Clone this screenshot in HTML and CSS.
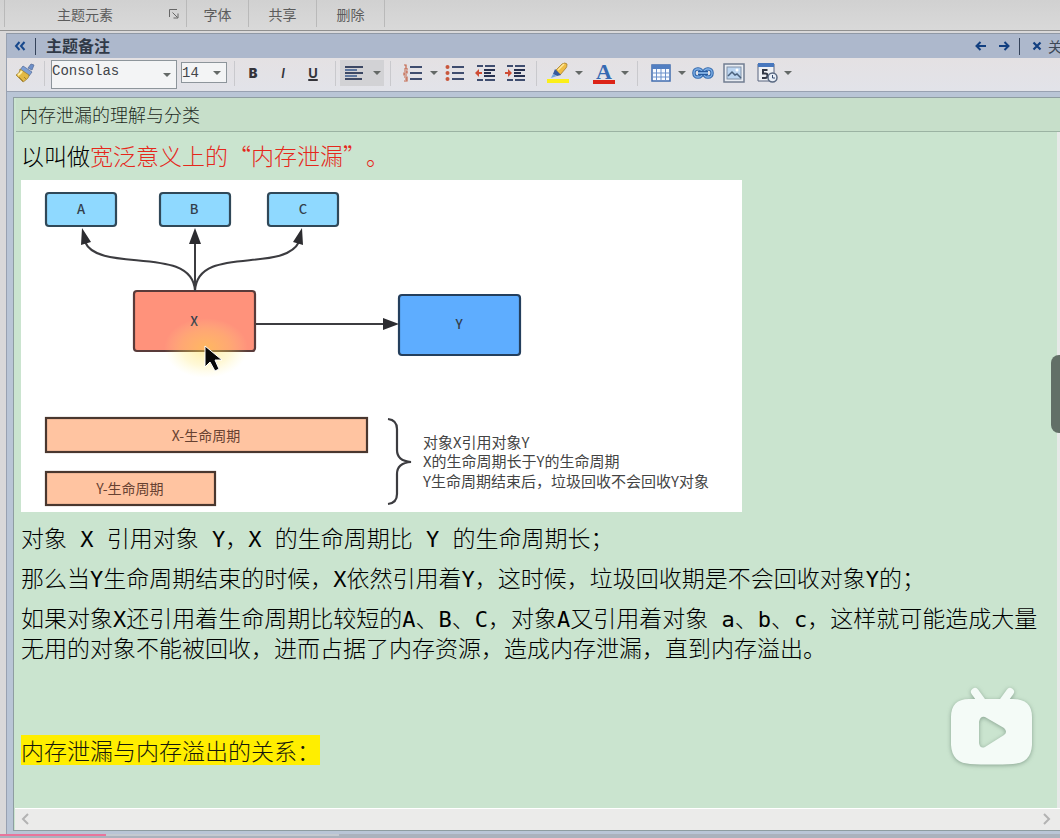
FILE: index.html
```html
<!DOCTYPE html>
<html lang="zh-CN">
<head>
<meta charset="utf-8">
<title>主题备注</title>
<link rel="stylesheet" href="styles.css">
</head>
<body>
<header class="ribbon">
  <div class="ribbon-group ribbon-group-wide"><span>主题元素</span>
    <button class="launcher" aria-label="更多主题元素"><svg width="12" height="12" viewBox="0 0 12 12" fill="none" stroke="#666"><path d="M1.500 9V1.500H9M4.500 4.500L9.500 9.500M10 5.500V10H5.500"/></svg></button>
  </div>
  <div class="ribbon-group ribbon-group-first"><span>字体</span></div>
  <div class="ribbon-group"><span>共享</span></div>
  <div class="ribbon-group"><span>删除</span></div>
</header>

<main class="panel">
  <div class="titlebar">
    <button class="tb-btn" aria-label="折叠"><svg width="12" height="12" viewBox="0 0 12 12" fill="none" stroke="#17488c" stroke-width="2"><path d="M5.500 2L2 6l3.500 4M10.500 2L7 6l3.500 4"/></svg></button>
    <span class="tb-line"></span>
    <h2 class="tb-title">主题备注</h2>
    <button class="tb-btn nav-prev" aria-label="上一个"><svg width="12" height="12" viewBox="0 0 12 12" fill="none" stroke="#123f80" stroke-width="2"><path d="M11 6H2M5.500 2L1.500 6l4 4"/></svg></button>
    <button class="tb-btn nav-next" aria-label="下一个"><svg width="12" height="12" viewBox="0 0 12 12" fill="none" stroke="#123f80" stroke-width="2"><path d="M1 6h9M6.500 2l4 4-4 4"/></svg></button>
    <span class="tb-line"></span>
    <button class="tb-btn close"><svg width="10" height="10" viewBox="0 0 10 10" fill="none" stroke="#123f80" stroke-width="2.200"><path d="M1.500 1.500l7 7M8.500 1.500l-7 7"/></svg><span>关闭</span></button>
  </div>

  <div class="toolbar">
    <button class="tool" aria-label="格式刷"><svg width="22" height="22" viewBox="0 0 22 22"><path d="M14 6l3-4 3 1-2 5z" fill="#6d8fc9" stroke="#5b719c" stroke-width=".8"/><path d="M9 4l9 6-3 4-9-6z" fill="#7d9fd6" stroke="#5a719c" stroke-width=".8"/><path d="M6 7l9 6c0 3-3 5-6 7L2 13c2-1 4-3 4-6z" fill="#e3b944" stroke="#9c8038" stroke-width=".8"/><path d="M4 13c2-1 3-2 4-4" stroke="#fff0a8" stroke-width="2" fill="none"/><path d="M9 19l-4-4M12 17l-2-2" stroke="#a9822a" fill="none"/></svg></button>
    <span class="sep"></span>
    <div class="fields">
      <select class="font-name" aria-label="字体"><option>Consolas</option></select>
      <select class="font-size" aria-label="字号"><option>14</option></select>
    </div>
    <span class="sep"></span>
    <div class="styles">
      <button class="tool bold">B</button><button class="tool italic">I</button><button class="tool underline">U</button>
    </div>
    <span class="sep"></span>
    <button class="align" aria-label="对齐"><svg width="20" height="16" viewBox="0 0 20 16" stroke="#3c4864" stroke-width="2"><path d="M1 2h18M1 8h18" /><path d="M1 5h12M1 11h12" stroke="#5c769e"/><path d="M1 14h17"/></svg><i class="caret"></i></button>
    <span class="sep"></span>
    <div class="lists">
      <div class="split"><button class="tool" aria-label="编号"><svg width="20" height="18" viewBox="0 0 20 18" fill="none"><path d="M7 3h12M7 9h12M7 15h12" stroke="#3f4d6f" stroke-width="2"/><path d="M1 1h2v4M1 5h4M1 7h3v2H1v2h3M1 13h3v4H1M2 15h2" stroke="#c46449" stroke-width="1.200"/></svg></button><button class="drop" aria-label="编号选项"><i class="caret"></i></button></div>
      <button class="tool" aria-label="项目符号"><svg width="20" height="18" viewBox="0 0 20 18"><path d="M7 3h12M7 9h12M7 15h12" stroke="#3f4d6f" stroke-width="2"/><g fill="#c9573c"><circle cx="2.500" cy="3" r="2"/><circle cx="2.500" cy="9" r="2"/><circle cx="2.500" cy="15" r="2"/></g></svg></button>
      <button class="tool indent" aria-label="减少缩进"><svg width="22" height="18" viewBox="0 0 22 18"><path d="M3 2h6M11 2h10M3 16h6M11 16h10" stroke="#3f4d6f" stroke-width="2"/><path d="M10 6h11M10 9h7M10 12h11" stroke="#26304f" stroke-width="2"/><path d="M1 9l4-4v3h3v2H5v3z" fill="#cf4c34"/></svg></button>
      <button class="tool indent" aria-label="增加缩进"><svg width="22" height="18" viewBox="0 0 22 18"><path d="M3 2h6M11 2h10M3 16h6M11 16h10" stroke="#3f4d6f" stroke-width="2"/><path d="M10 6h11M10 9h7M10 12h11" stroke="#26304f" stroke-width="2"/><path d="M8 9L4 5v3H1v2h3v3z" fill="#cf4c34"/></svg></button>
    </div>
    <span class="sep"></span>
    <div class="colors">
      <div class="split"><button class="tool" aria-label="突出显示"><svg width="22" height="22" viewBox="0 0 22 22"><path d="M9 8l6-6q3-2 5 0 0 3-1 4l-6 7z" fill="#efbd45" stroke="#a67d2b" stroke-width=".8"/><path d="M11 8l6-6" stroke="#ffe99a" stroke-width="1.500"/><path d="M8 7l6 6-4 1-4-2z" fill="#375a9d"/><path d="M6 12l4 2-6 2z" fill="#72a5df"/><path d="M0 17h22v4H0z" fill="#fbef1a"/></svg></button><button class="drop" aria-label="突出显示颜色"><i class="caret"></i></button></div>
      <div class="split"><button class="tool font-color" aria-label="字体颜色"><span>A</span></button><button class="drop" aria-label="字体颜色选项"><i class="caret"></i></button></div>
    </div>
    <span class="sep"></span>
    <div class="inserts">
      <div class="split"><button class="tool" aria-label="表格"><svg width="20" height="18" viewBox="0 0 20 18"><rect x="1" y="1" width="18" height="16" fill="#f8fbff" stroke="#426daf" stroke-width="1.500"/><path d="M1 1h18v4H1z" fill="#527fc2"/><path d="M1 9h18M1 13h18M5.500 5v12M10 5v12M14.500 5v12" stroke="#6a90ca"/></svg></button><button class="drop" aria-label="表格选项"><i class="caret"></i></button></div>
      <button class="tool" aria-label="超链接"><svg width="22" height="14" viewBox="0 0 22 14" fill="none"><rect x="2" y="3" width="8" height="8" rx="3.500" stroke="#366bad" stroke-width="3.500"/><rect x="12" y="3" width="8" height="8" rx="3.500" stroke="#366bad" stroke-width="3.500"/><rect x="2" y="3" width="8" height="8" rx="3.500" stroke="#7fb0e8" stroke-width="1.300"/><rect x="12" y="3" width="8" height="8" rx="3.500" stroke="#7fb0e8" stroke-width="1.300"/><path d="M6 7h10" stroke="#285a9d" stroke-width="4"/><path d="M6 7h10" stroke="#9bc7f5" stroke-width="1.500"/></svg></button>
      <button class="tool image" aria-label="图片"><svg width="22" height="20" viewBox="0 0 22 20"><rect x="1" y="1" width="20" height="18" fill="#e8ecf2" stroke="#727e91" stroke-width="1.500"/><rect x="4" y="4" width="14" height="12" fill="#bcd5f0" stroke="#8292a8"/><path d="M5 13l4-4 3 3 2-1 4 4" fill="none" stroke="#4a617d" stroke-width="1.500"/><circle cx="14" cy="7" r="1.500" fill="#fff"/></svg></button>
      <div class="split date"><button class="tool" aria-label="日期"><svg width="22" height="22" viewBox="0 0 22 22"><path d="M2 2h16v17H2z" fill="#eff1f5" stroke="#59657e"/><path d="M2 1h16v4H2z" fill="#4777be"/><path d="M11.500 8H7v3.500h2.500q2 0 2 2.200t-2.500 2.300H6" fill="none" stroke="#333947" stroke-width="2"/><circle cx="16.500" cy="15.500" r="4.500" fill="#e9eff7" stroke="#586881" stroke-width="1.500"/><path d="M16.500 13v3h2.500" fill="none" stroke="#364b6e"/></svg></button><button class="drop" aria-label="日期选项"><i class="caret"></i></button></div>
    </div>
  </div>

  <section class="note">
    <h1 class="note-title">内存泄漏的理解与分类</h1>
    <article class="editor">
      <p>以叫做<span class="red">宽泛意义上的“内存泄漏”。</span></p>
      <figure class="diagram">
        <svg viewBox="0 0 721 332" role="img" aria-label="对象引用与生命周期">
          <defs><radialGradient id="glow"><stop offset="0" stop-color="#ffdc45" stop-opacity=".5"/><stop offset=".6" stop-color="#ffe45e" stop-opacity=".25"/><stop offset="1" stop-color="#fff48a" stop-opacity="0"/></radialGradient></defs>
          <g fill="#8fd9ff" stroke="#304858" stroke-width="2.200"><rect x="25" y="13" width="70" height="33" rx="3"/><rect x="139" y="13" width="70" height="33" rx="3"/><rect x="247" y="13" width="70" height="33" rx="3"/></g>
          <rect x="113" y="111" width="121" height="60" rx="3" fill="#ff927b" stroke="#593b3a" stroke-width="2.200"/>
          <rect x="378" y="115" width="121" height="60" rx="3" fill="#5eadff" stroke="#243f5d" stroke-width="2.200"/>
          <g fill="none" stroke="#3c3c40" stroke-width="2"><path d="M174 111V60M174 111C172 64 78 94 64 62M174 111C176 64 262 94 278 62M235 144H364"/></g>
          <g fill="#2c2c30"><path d="M61 48l9 14-10 3zM174 48l6 16h-12zM281 48l1 17-10-3zM378 144l-16 6v-12z"/></g>
          <g class="node-label"><text x="60" y="34">A</text><text x="173" y="34">B</text><text x="282" y="34">C</text><text x="173" y="146">X</text><text x="438" y="149">Y</text></g>
          <g fill="#ffc4a1" stroke="#49372f" stroke-width="2.200"><rect x="25" y="238" width="321" height="34"/><rect x="25" y="292" width="169" height="33"/></g>
          <g class="bar-label"><text x="185" y="261">X-生命周期</text><text x="109" y="314">Y-生命周期</text></g>
          <path d="M367 239q9 1 9 10v21q0 11 14 12-14 1-14 12v20q0 9-9 10" fill="none" stroke="#3c3c40" stroke-width="2.200"/>
          <g class="caption"><text x="402" y="268">对象X引用对象Y</text><text x="402" y="287">X的生命周期长于Y的生命周期</text><text x="402" y="307">Y生命周期结束后，垃圾回收不会回收Y对象</text></g>
          <ellipse cx="185" cy="168" rx="42" ry="30" fill="url(#glow)"/>
          <path d="M184 166v21l5-5 5 9 4-2-4-9h7z" fill="#090909" stroke="#fff"/>
        </svg>
      </figure>
      <p>对象<span class="mono"> X </span>引用对象<span class="mono"> Y</span>，<span class="mono">X </span>的生命周期比<span class="mono"> Y </span>的生命周期长；</p>
      <p>那么当<span class="mono">Y</span>生命周期结束的时候，<span class="mono">X</span>依然引用着<span class="mono">Y</span>，这时候，垃圾回收期是不会回收对象<span class="mono">Y</span>的；</p>
      <p>如果对象<span class="mono">X</span>还引用着生命周期比较短的<span class="mono">A</span>、<span class="mono">B</span>、<span class="mono">C</span>，对象<span class="mono">A</span>又引用着对象<span class="mono"> a</span>、<span class="mono">b</span>、<span class="mono">c</span>，这样就可能造成大量无用的对象不能被回收，进而占据了内存资源，造成内存泄漏，直到内存溢出。</p>
      <p class="next-topic"><mark>内存泄漏与内存溢出的关系：</mark></p>
    </article>
    <div class="hscroll">
      <button aria-label="向左滚动"><svg width="8" height="12" viewBox="0 0 8 12" fill="none" stroke="#b3b3b3" stroke-width="2"><path d="M7 1L2 6l5 5"/></svg></button>
      <button aria-label="向右滚动"><svg width="8" height="12" viewBox="0 0 8 12" fill="none" stroke="#b3b3b3" stroke-width="2"><path d="M1 1l5 5-5 5"/></svg></button>
    </div>
  </section>
</main>

<button class="side-handle" aria-label="展开侧栏"></button>
<button class="play" aria-label="播放"><svg width="90" height="86" viewBox="0 0 90 86"><path d="M28 7l8 11M63 7l-8 11" stroke="#f4fbf7" stroke-width="8" stroke-linecap="round"/><path fill-rule="evenodd" d="M22 14H66Q85 14 85 32V60Q84 78 66 79 45 80 23 79 5 78 4 60V32Q4 14 22 14ZM32 37V58Q33 64 38 62L57 50Q61 47 57 43L38 32Q33 31 32 37Z" fill="#f4fbf7"/></svg></button>
<div class="video-progress"><div class="buffered"></div><div class="played"></div></div>
</body>
</html>
```
FILE: styles.css
```css
* { box-sizing: border-box; }

body {
  margin: 0;
  min-height: 100vh;
  display: flex;
  flex-direction: column;
  overflow: hidden;
  background: #d9d8d9;
  font-family: "Noto Sans CJK SC", sans-serif;
  text-spacing-trim: space-all;
}

button {
  border: 0;
  padding: 0;
  background: none;
  font: inherit;
  color: inherit;
}

svg { display: block; flex: none; }

h1, h2, p, figure { margin: 0; }

/* Ribbon */
.ribbon {
  display: flex;
  height: 31px;
  padding: 0 0 3px 4px;
  background: linear-gradient(#d1d1d1, #d9d9d9);
  border-bottom: 1px solid #909090;
  color: #5c5c5c;
  font-size: 14px;
}

.ribbon-group {
  display: flex;
  align-items: center;
  justify-content: center;
  width: 68px;
  border-right: 1px solid #b9b9b9;
}

.ribbon-group-first { width: 62px; }

.ribbon-group-wide {
  width: 183px;
  padding: 0 4px 0 52px;
  justify-content: space-between;
  border-left: 1px solid #b9b9b9;
}

.launcher { width: 14px; }

/* Notes panel */
.panel {
  flex: 1;
  display: flex;
  flex-direction: column;
  margin: 2px 0 0 6px;
  border-top: 1px solid #8f98a5;
  border-left: 1px solid #98a1b1;
  background: #b9c5d6;
}

.titlebar {
  display: flex;
  align-items: center;
  height: 24px;
  padding-left: 7px;
  background: #adb8cc;
  overflow: hidden;
}

.tb-btn {
  display: flex;
  align-items: center;
  flex: none;
  height: 20px;
}

.tb-line {
  flex: none;
  width: 1px;
  height: 17px;
  margin: 0 10px 0 9px;
  background: #35435a;
}

.tb-title {
  flex: 1;
  font-size: 16px;
  line-height: 22px;
  padding-bottom: 2px;
  color: #303947;
}

.nav-next { margin-left: 11px; }

.close {
  width: 28px;
  gap: 6px;
  margin-left: 2px;
  white-space: nowrap;
  font-size: 14px;
  color: #3d4857;
}

.toolbar {
  display: flex;
  align-items: center;
  height: 34px;
  padding: 0 0 3px 7px;
  background: linear-gradient(#e4e1e3, #e2e3e9);
  border-bottom: 1px solid #98a1b1;
}

.sep {
  flex: none;
  width: 1px;
  height: 25px;
  background: #c9c9cd;
}

.tool, .drop {
  display: flex;
  align-items: center;
  justify-content: center;
  flex: none;
  width: 24px;
  height: 26px;
}

.drop { width: 18px; }
.split { display: flex; }

.caret {
  border: 4px solid transparent;
  border-top-color: #646967;
  border-bottom: 0;
}

.toolbar > .tool { width: 22px; margin-right: 8px; }

.fields {
  display: flex;
  align-items: flex-start;
  align-self: flex-start;
  gap: 4px;
  margin: 2px 7px 0 6px;
}

.fields select {
  appearance: none;
  margin: 0;
  border: 1px solid #8d959b;
  border-radius: 0;
  padding: 0;
  color: #42454a;
  background: #f3f4f5 url("data:image/svg+xml,%3Csvg xmlns='http://www.w3.org/2000/svg' width='8' height='4'%3E%3Cpath d='M0 0h8L4 4z' fill='%23646967'/%3E%3C/svg%3E") no-repeat right 5px center;
  font: 14px "Liberation Mono", monospace;
}

.fields .font-name {
  width: 126px;
  height: 29px;
  padding-bottom: 7px;
}

.fields .font-size {
  width: 46px;
  height: 21px;
  margin-top: 2px;
}

.styles {
  display: flex;
  gap: 6px;
  margin: 0 10px 0 6px;
  color: #34343a;
  font: bold 13px Inter, sans-serif;
}

.bold { font-weight: 900; }
.italic { font-style: italic; font-weight: 600; }
.underline { text-decoration: underline 2px; }

.align {
  display: flex;
  align-items: center;
  justify-content: center;
  gap: 9px;
  width: 44px;
  height: 26px;
  margin: 0 6px 0 4px;
  background: #d2d2d5;
}

.lists { display: flex; margin: 0 9px 0 10px; }
.indent { margin-left: 6px; }
.colors { display: flex; gap: 4px; margin: 0 3px 0 9px; }

.font-color span {
  width: 22px;
  border-bottom: 4px solid #dc2418;
  color: #3569b2;
  font: bold 22px/17px "Liberation Serif", serif;
}

.inserts { display: flex; margin-left: 11px; }
.image { margin-left: 7px; }
.date { margin-left: 9px; }

/* Note */
.note {
  flex: 1;
  display: flex;
  flex-direction: column;
  margin: 5px 0 7px 6px;
  border: 1px solid #8e9da1;
  border-right: 0;
  background: #cae4cf;
}

.note-title {
  margin-left: 2px;
  padding-left: 4px;
  border-bottom: 1px solid #9bb3a3;
  background: #c7dfca;
  color: #1d2a22;
  font-size: 18px;
  font-weight: 300;
  line-height: 33px;
}

.editor {
  flex: 1;
  display: flex;
  flex-direction: column;
  gap: 10px;
  padding: 8px 16px 10px 7px;
  border-right: 3px solid #e7e9e8;
  color: #000;
  font-size: 23px;
  font-weight: 300;
  line-height: 30px;
}

.red { color: #e5281c; }

.mono {
  font-family: "DejaVu Sans Mono", monospace;
  font-size: 22px;
  line-height: 1;
  white-space: pre-wrap;
}

.diagram {
  width: 100%;
  max-width: 721px;
  background: #fff;
}

.diagram svg { width: 100%; height: auto; }

.node-label {
  text-anchor: middle;
  font-size: 13px;
  font-weight: 500;
  fill: #333f4c;
}

.bar-label {
  text-anchor: middle;
  font-size: 14px;
  font-weight: 400;
  fill: #674131;
}

.caption {
  font-size: 15px;
  font-weight: 400;
  fill: #444;
}

.next-topic { margin-top: 63px; }

mark {
  display: inline-block;
  background: #ffee00;
  color: #15180c;
}

.hscroll {
  display: flex;
  align-items: center;
  justify-content: space-between;
  height: 22px;
  margin-left: 1px;
  padding: 0 9px 2px 6px;
  border-top: 1px solid #fff;
  background: #ebebea;
}

/* Overlays */
.side-handle {
  position: absolute;
  top: 355px;
  right: 0;
  width: 9px;
  height: 78px;
  border-radius: 8px 0 0 8px;
  background: #626f67;
}

.play {
  position: absolute;
  right: 23px;
  bottom: 67px;
  filter: drop-shadow(0 1px 2px #5e786899);
}

.video-progress {
  position: absolute;
  left: 0;
  right: 0;
  bottom: 0;
  height: 4px;
  background: #aab2bd;
}

.buffered, .played { position: absolute; height: 2px; }
.buffered { width: 32%; background: #c4cad1; }
.played { width: 10%; background: #e9749b; }
```
